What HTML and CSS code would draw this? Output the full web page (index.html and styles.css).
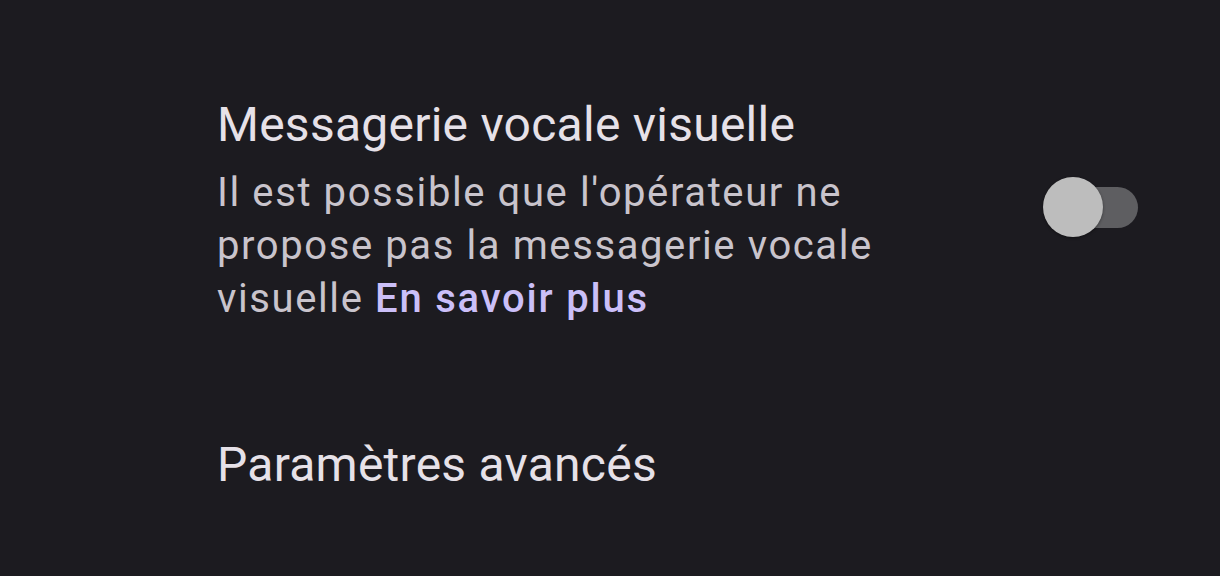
FILE: index.html
```html
<!DOCTYPE html>
<html lang="fr">
<head>
  <meta charset="UTF-8">
  <meta name="viewport" content="width=device-width, initial-scale=1.0">
  <title>Messagerie vocale</title>
  <link rel="stylesheet" href="styles.css">
</head>
<body>
  <div class="prefs">
    <!-- messagerie vocale visuelle -->
    <div class="pref">
      <div class="pref-text">
        <div class="pref-title">Messagerie vocale visuelle</div>
        <div class="pref-summary">Il est possible que l'opérateur ne propose pas la messagerie vocale visuelle <a class="pref-link" href="#">En savoir plus</a></div>
      </div>
      <div class="pref-widget">
        <span class="switch"><span class="switch-thumb"></span></span>
      </div>
    </div>

    <!-- paramètres avancés -->
    <div class="pref pref-simple">
      <div class="pref-text">
        <div class="pref-title">Paramètres avancés</div>
      </div>
    </div>
  </div>
</body>
</html>
```

FILE: styles.css
```css
body {
  margin: 0;
  background-color: #1c1b20;
  font-family: Roboto, 'Noto Sans', sans-serif;
  color: #e6e1e8;
}
.prefs {
  padding: 97px 82px 0 217px;
}
.pref {
  display: flex;
  align-items: center;
}
.pref-text {
  flex: 1;
  max-width: 720px;
}
.pref-title {
  font-size: 48px;
  line-height: 56px;
  letter-spacing: 0.25px;
  color: #e6e1e8;
}
.pref-summary {
  margin-top: 13px;
  font-size: 40px;
  line-height: 53px;
  letter-spacing: 1.6px;
  color: #c9c4cc;
}
.pref-link {
  color: #cbbff8;
  font-weight: 500;
  letter-spacing: 1.8px;
  text-decoration: none;
}
.pref-widget {
  margin-left: auto;
  margin-bottom: 8px;
}
.switch {
  position: relative;
  display: block;
  width: 92px;
  height: 41px;
  border-radius: 21px;
  background-color: #5e5e61;
}
.switch-thumb {
  position: absolute;
  left: -3px;
  top: -10px;
  width: 60px;
  height: 60px;
  border-radius: 50%;
  background-color: #bdbdbd;
  box-shadow: 0 1px 3px rgba(0, 0, 0, 0.4);
}
.pref-simple {
  margin-top: 112px;
}
```
